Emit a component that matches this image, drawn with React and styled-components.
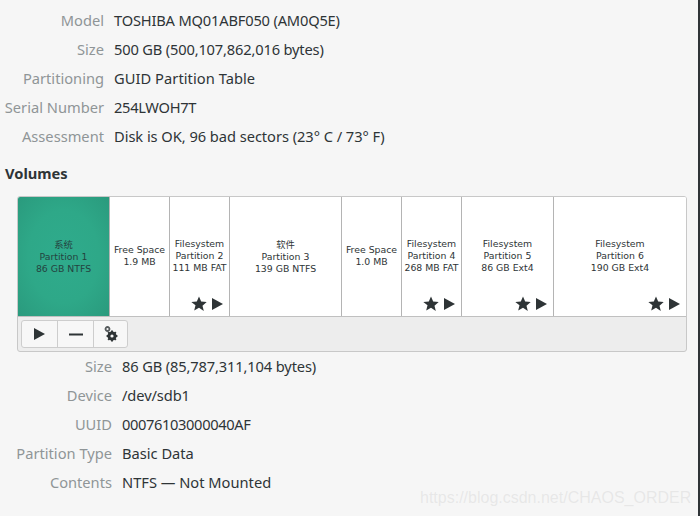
import { Fragment } from "react";
import styled, { createGlobalStyle } from "styled-components";

const GlobalStyle = createGlobalStyle`
   html, body {
      margin: 0;
      padding: 0;
      background: #f6f6f6;
   }
`;

const Window = styled.div`
   position: relative;
   width: 700px;
   height: 516px;
   box-sizing: border-box;
   overflow: hidden;
   padding-top: 5px;
   background: #f6f6f6;
   border-right: 2px solid #2f3437;
   font-family: "Noto Sans", sans-serif;
   font-size: 14.67px;
   color: #2e3436;
`;

const InfoGrid = styled.div`
   display: grid;
   grid-template-columns: ${(p) => p.$label}px 1fr;
   grid-auto-rows: 29px;
   column-gap: 10px;
   align-items: center;
   white-space: nowrap;
`;

const Label = styled.div`
   text-align: right;
   color: #8f9597;
`;

const Value = styled.div`
   color: #2e3436;
   letter-spacing: ${(p) => p.$spacing || 0}px;
`;

const Heading = styled.div`
   margin: 13px 0 0 5px;
   height: 20px;
   line-height: 20px;
   font-weight: 700;
`;

const VolumeBox = styled.div`
   width: 670px;
   height: 156px;
   box-sizing: border-box;
   margin: 13px 0 -1px 17px;
   border: 1px solid #c8c8c8;
   border-radius: 3px;
   background: #ededed;
   overflow: hidden;
`;

const PartitionRow = styled.div`
   display: flex;
   height: 120px;
   border-bottom: 1px solid #c0c0c0;
   box-sizing: border-box;
   background: #fff;
`;

const Partition = styled.div`
   position: relative;
   flex: 0 0 ${(p) => p.$width}px;
   box-sizing: border-box;
   display: flex;
   flex-direction: column;
   align-items: center;
   padding-top: ${(p) => p.$top}px;
   border-right: ${(p) => (p.$last ? "none" : "1px solid #b4b4b4")};
   background: ${(p) =>
      p.$selected
         ? "radial-gradient(ellipse at center, #2fab8c 0%, #2ea888 55%, #2a9a7d 100%)"
         : "#fff"};
   font-family: "DejaVu Sans", sans-serif;
   font-size: 9.33px;
   line-height: 12px;
   color: ${(p) => (p.$selected ? "#24433f" : "#2e3436")};
   white-space: nowrap;
   text-align: center;
`;

const CjkLine = styled.div`
   font-family: "Noto Sans CJK SC", "DejaVu Sans", sans-serif;
   font-size: 9.33px;
   line-height: 13px;
`;

const Emblems = styled.div`
   position: absolute;
   right: 5px;
   bottom: 4px;
   display: flex;
   align-items: center;
   gap: 5px;
`;

const Toolbar = styled.div`
   display: flex;
   padding: 3px;
`;

const ToolGroup = styled.div`
   display: flex;
   height: 28px;
   box-sizing: border-box;
   border: 1px solid #cdcdcd;
   border-radius: 3px;
   background: #f7f7f7;
   overflow: hidden;
`;

const ToolButton = styled.div`
   width: ${(p) => p.$width}px;
   box-sizing: border-box;
   display: flex;
   align-items: center;
   justify-content: center;
   border-right: ${(p) => (p.$last ? "none" : "1px solid #cdcdcd")};
`;

const Watermark = styled.div`
   position: absolute;
   left: 420px;
   top: 488px;
   font-family: "Liberation Sans", sans-serif;
   font-size: 16px;
   line-height: 20px;
   color: rgba(200, 200, 200, 0.32);
   white-space: nowrap;
`;

const StarIcon = () => (
   <svg width="16" height="16" viewBox="0 0 16 16">
      <path
         fill="#2e3436"
         d="M8 .5l2.2 5.1 5.5.5-4.2 3.6 1.3 5.4L8 11.7l-4.8 2.9 1.3-5.4L.3 6.1l5.5-.5z"
      />
   </svg>
);

const PlayIcon = () => (
   <svg width="12" height="12" viewBox="0 0 12 12">
      <path fill="#2e3436" d="M0 0l11 6-11 6z" />
   </svg>
);

const MinusIcon = () => (
   <svg width="14" height="3" viewBox="0 0 14 3">
      <rect width="14" height="2" y="0.5" fill="#2e3436" />
   </svg>
);

const GearsIcon = () => (
   <svg width="14" height="16" viewBox="0 0 14 16">
      <circle cx="3.5" cy="3" r="2" fill="none" stroke="#555a5c" strokeWidth="1.8" />
      <circle cx="8" cy="10" r="3.4" fill="none" stroke="#2e3436" strokeWidth="2.4" />
      <g stroke="#2e3436" strokeWidth="1.9">
         <line x1="8" y1="4.6" x2="8" y2="15.4" />
         <line x1="2.6" y1="10" x2="13.4" y2="10" />
         <line x1="4.2" y1="6.2" x2="11.8" y2="13.8" />
         <line x1="11.8" y1="6.2" x2="4.2" y2="13.8" />
      </g>
      <circle cx="8" cy="10" r="1.6" fill="#f7f7f7" />
   </svg>
);

const diskInfo = [
   ["Model", "TOSHIBA MQ01ABF050 (AM0Q5E)", -0.18],
   ["Size", "500 GB (500,107,862,016 bytes)", -0.17],
   ["Partitioning", "GUID Partition Table", 0.05],
   ["Serial Number", "254LWOH7T", -0.3],
   ["Assessment", "Disk is OK, 96 bad sectors (23° C / 73° F)", -0.05],
];

const partInfo = [
   ["Size", "86 GB (85,787,311,104 bytes)", -0.14],
   ["Device", "/dev/sdb1", -0.1],
   ["UUID", "00076103000040AF", -0.37],
   ["Partition Type", "Basic Data", 0],
   ["Contents", "NTFS — Not Mounted", 0],
];

const partitions = [
   { width: 92, cjk: "系统", lines: ["Partition 1", "86 GB NTFS"], selected: true, top: 41 },
   { width: 60, lines: ["Free Space", "1.9 MB"], top: 47 },
   { width: 60, lines: ["Filesystem", "Partition 2", "111 MB FAT"], emblems: true, top: 41 },
   { width: 112, cjk: "软件", lines: ["Partition 3", "139 GB NTFS"], top: 41 },
   { width: 60, lines: ["Free Space", "1.0 MB"], top: 47 },
   { width: 60, lines: ["Filesystem", "Partition 4", "268 MB FAT"], emblems: true, top: 41 },
   { width: 92, lines: ["Filesystem", "Partition 5", "86 GB Ext4"], emblems: true, top: 41 },
   { width: 132, lines: ["Filesystem", "Partition 6", "190 GB Ext4"], emblems: true, top: 41, last: true },
];

export default function App() {
   return (
      <Window>
         <GlobalStyle />
         <InfoGrid $label={104}>
            {diskInfo.map(([k, v, s]) => (
               <Fragment key={k}>
                  <Label>{k}</Label>
                  <Value $spacing={s}>{v}</Value>
               </Fragment>
            ))}
         </InfoGrid>
         <Heading>Volumes</Heading>
         <VolumeBox>
            <PartitionRow>
               {partitions.map((p, i) => (
                  <Partition key={i} $width={p.width} $top={p.top} $selected={p.selected} $last={p.last}>
                     {p.cjk && <CjkLine>{p.cjk}</CjkLine>}
                     {p.lines.map((l) => (
                        <div key={l}>{l}</div>
                     ))}
                     {p.emblems && (
                        <Emblems>
                           <StarIcon />
                           <PlayIcon />
                        </Emblems>
                     )}
                  </Partition>
               ))}
            </PartitionRow>
            <Toolbar>
               <ToolGroup>
                  <ToolButton $width={36}>
                     <PlayIcon />
                  </ToolButton>
                  <ToolButton $width={36}>
                     <MinusIcon />
                  </ToolButton>
                  <ToolButton $width={33} $last>
                     <GearsIcon />
                  </ToolButton>
               </ToolGroup>
            </Toolbar>
         </VolumeBox>
         <InfoGrid $label={112}>
            {partInfo.map(([k, v, s]) => (
               <Fragment key={k}>
                  <Label>{k}</Label>
                  <Value $spacing={s}>{v}</Value>
               </Fragment>
            ))}
         </InfoGrid>
         <Watermark>https://blog.csdn.net/CHAOS_ORDER</Watermark>
      </Window>
   );
}
